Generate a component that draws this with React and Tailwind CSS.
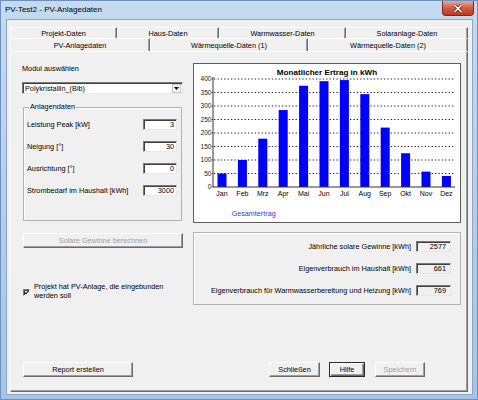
import React from "react";

const row1 = [
    ["Projekt-Daten", "w-[107px]"],
    ["Haus-Daten", "w-[102px]"],
    ["Warmwasser-Daten", "w-[127px]"],
    ["Solaranlage-Daten", "w-[122px]"],
];
const row2 = [
    ["PV-Anlagedaten", "w-[140px]"],
    ["Wärmequelle-Daten (1)", "w-[158px]"],
    ["Wärmequelle-Daten (2)", "w-[160px]"],
];

const ertrag = [
    ["Jan", 50], ["Feb", 100], ["Mrz", 179], ["Apr", 285], ["Mai", 375], ["Jun", 392],
    ["Jul", 396], ["Aug", 344], ["Sep", 220], ["Okt", 125], ["Nov", 57], ["Dez", 41],
];

const raised = "bg-[#f0f0f0] border border-t-white border-l-white border-r-[#696969] border-b-[#696969] shadow-[inset_-1px_-1px_0_#a0a0a0] flex items-center justify-center";
const sunken = "border border-t-[#7a7a7a] border-l-[#7a7a7a] border-r-[#e8e8e8] border-b-[#e8e8e8] shadow-[inset_1px_1px_0_#404040]";

function Chart() {
    const yy = (v) => 124 - v * 0.27;
    const ticks = [0, 50, 100, 150, 200, 250, 300, 350, 400];
    return (
        <svg width="266" height="158" viewBox="1 1 266 158" fontFamily="'Liberation Sans', Arial, sans-serif" className="block">
            <text x="134" y="11.5" textAnchor="middle" fontSize="8.1" fontWeight="bold">Monatlicher Ertrag in kWh</text>
            {ticks.map((t) => (
                <g key={t}>
                    {t > 0 && <line x1="21" x2="262" y1={yy(t)} y2={yy(t)} stroke="#222" strokeWidth="1.2" strokeDasharray="1.3 2.1" />}
                    <line x1="18.5" x2="20" y1={yy(t)} y2={yy(t)} stroke="#333" strokeWidth="0.8" />
                    <text x="18.5" y={yy(t) + 2.3} textAnchor="end" fontSize="6.6" fill="#222">{t}</text>
                </g>
            ))}
            {ertrag.map(([m, v], i) => {
                const cx = 29 + i * 20.4;
                return (
                    <g key={m}>
                        <rect x={cx - 4.5} y={yy(v)} width="9" height={v * 0.27} fill="#0000ff" />
                        <text x={cx} y="132.5" textAnchor="middle" fontSize="7">{m}</text>
                    </g>
                );
            })}
            <line x1="20" x2="20" y1="14" y2="124" stroke="#333" />
            <line x1="20" x2="262" y1="124" y2="124" stroke="#333" />
            <text x="38.7" y="152.5" fontSize="7.2" fill="#3a3ad0">Gesamtertrag</text>
        </svg>
    );
}

function Field({ label, value }) {
    return (
        <div className="flex items-center justify-between h-[11px]">
            <span>{label}</span>
            <div className={"w-[34px] h-[11px] bg-white text-right pr-[2px] leading-[9px] " + sunken}>{value}</div>
        </div>
    );
}

function Result({ label, value }) {
    return (
        <div className="flex items-center justify-end gap-[5px] h-[11px]">
            <span>{label}</span>
            <div className={"w-[35px] h-[11px] bg-[#f0f0f0] text-right pr-[4px] leading-[9px] " + sunken}>{value}</div>
        </div>
    );
}

export default function App() {
    return (
        <div className="w-[478px] h-[400px] flex flex-col bg-gradient-to-b from-[#c4daf1] to-[#a6c4e7] border border-[#6f90bb] overflow-hidden font-['Liberation_Sans',Arial,sans-serif] text-[7.3px] leading-[9px] text-black">
            <div className="h-[18px] flex items-start shrink-0">
                <span className="pl-[4px] pt-[4px] text-[8px] leading-[10px]">PV-Test2 - PV-Anlagedaten</span>
                <div className="ml-auto mr-[3px] w-[32px] h-[15px] rounded-b-[4px] border border-t-0 border-[#7d2b1d] bg-gradient-to-b from-[#e9a897] via-[#d45a42] to-[#c0391f] flex items-center justify-center">
                    <svg width="10" height="9" viewBox="0 0 10 9">
                        <path d="M1.5 1 L8.5 8 M8.5 1 L1.5 8" stroke="#5a1a10" strokeWidth="3" />
                        <path d="M1.5 1 L8.5 8 M8.5 1 L1.5 8" stroke="#ffffff" strokeWidth="1.7" />
                    </svg>
                </div>
            </div>
            <div className="flex-1 ml-[5px] mr-[4px] mb-[4px] border border-[#8ba5c6] bg-[#f0f0f0] pt-[7px] pl-[3px] pr-[4px] pb-[2px] flex flex-col">
                <div className="flex h-[11px]">
                    {row1.map(([t, w]) => (
                        <div key={t} className={w + " flex items-center justify-center border-t border-l border-t-white border-l-white border-r border-r-[#696969] shadow-[inset_-1px_0_0_#a0a0a0]"}>{t}</div>
                    ))}
                </div>
                <div className="flex h-[13px]">
                    {row2.map(([t, w]) => (
                        <div key={t} className={w + " flex items-center justify-center border-t border-l border-t-white border-l-white border-r border-r-[#696969] shadow-[inset_-1px_0_0_#a0a0a0]"}>{t}</div>
                    ))}
                </div>
                <div className="flex-1 flex flex-col border border-t-white border-l-white border-r-[#696969] border-b-[#696969] shadow-[inset_-1px_-1px_0_#a0a0a0]">
                    <div className="flex pl-[11px] pt-[11px]">
                        <div className="w-[161px] flex flex-col">
                            <span className="mt-[1px] h-[9px]">Modul auswählen</span>
                            <div className={"mt-[9px] h-[12px] bg-white flex items-center justify-between pl-[2px] " + sunken}>
                                <span>Polykristallin_(Bib)</span>
                                <div className="w-[9px] h-[9px] mr-[1px] flex items-center justify-center border border-[#c8c8c8] bg-[#f4f4f4]">
                                    <svg width="5" height="3" viewBox="0 0 5 3"><path d="M0 0 H5 L2.5 3 Z" fill="#000" /></svg>
                                </div>
                            </div>
                            <fieldset className="mt-[8px] ml-[1px] w-[159px] border border-[#b4b4b4] shadow-[inset_1px_1px_0_#ffffff] pl-[3px] pr-[4px] pt-[7px] pb-[24px]">
                                <legend className="ml-[2px] px-[1px] leading-[10px]">Anlagendaten</legend>
                                <div className="flex flex-col gap-[11px]">
                                    <Field label="Leistung Peak [kW]" value="3" />
                                    <Field label="Neigung [°]" value="30" />
                                    <Field label="Ausrichtung [°]" value="0" />
                                    <Field label="Strombedarf im Haushalt [kWh]" value="3000" />
                                </div>
                            </fieldset>
                            <div className={"mt-[12px] ml-[1px] w-[160px] h-[15px] text-[#a0a0a0] " + raised}>Solare Gewinne berechnen</div>
                            <div className="mt-[35px] ml-[1px] flex items-start gap-[4px]">
                                <div className={"mt-[6px] w-[7px] h-[7px] bg-white flex items-center justify-center " + sunken}>
                                    <svg width="5" height="5" viewBox="0 0 5 5"><path d="M0.5 2.3 L2 3.8 L4.6 0.8" stroke="#000" strokeWidth="1.1" fill="none" /></svg>
                                </div>
                                <span className="w-[145px] leading-[8.5px]">Projekt hat PV-Anlage, die eingebunden werden soll</span>
                            </div>
                        </div>
                        <div className="ml-[10px] w-[268px] flex flex-col">
                            <div className="h-[160px] bg-white border border-[#5d5d5d]">
                                <Chart />
                            </div>
                            <div className="mt-[9px] h-[73px] border border-[#b4b4b4] shadow-[inset_1px_1px_0_#ffffff] pt-[8px] pr-[9px] flex flex-col gap-[11px]">
                                <Result label="Jährliche solare Gewinne [kWh]" value="2577" />
                                <Result label="Eigenverbrauch im Haushalt [kWh]" value="661" />
                                <Result label="Eigenverbrauch für Warmwasserbereitung und Heizung [kWh]" value="769" />
                            </div>
                        </div>
                    </div>
                    <div className="mt-auto mb-[14px] pl-[12px] flex">
                        <div className={"w-[110px] h-[15px] " + raised}>Report erstellen</div>
                        <div className={"ml-[136px] w-[51px] h-[15px] " + raised}>Schließen</div>
                        <div className="ml-[9px] w-[36px] h-[15px] border border-[#2a2a2a] bg-[#f0f0f0] shadow-[inset_1px_1px_0_#ffffff,inset_-1px_-1px_0_#696969,inset_-2px_-2px_0_#a0a0a0] flex items-center justify-center">Hilfe</div>
                        <div className={"ml-[10px] w-[50px] h-[15px] text-[#a0a0a0] " + raised}>Speichern</div>
                    </div>
                </div>
            </div>
        </div>
    );
}
